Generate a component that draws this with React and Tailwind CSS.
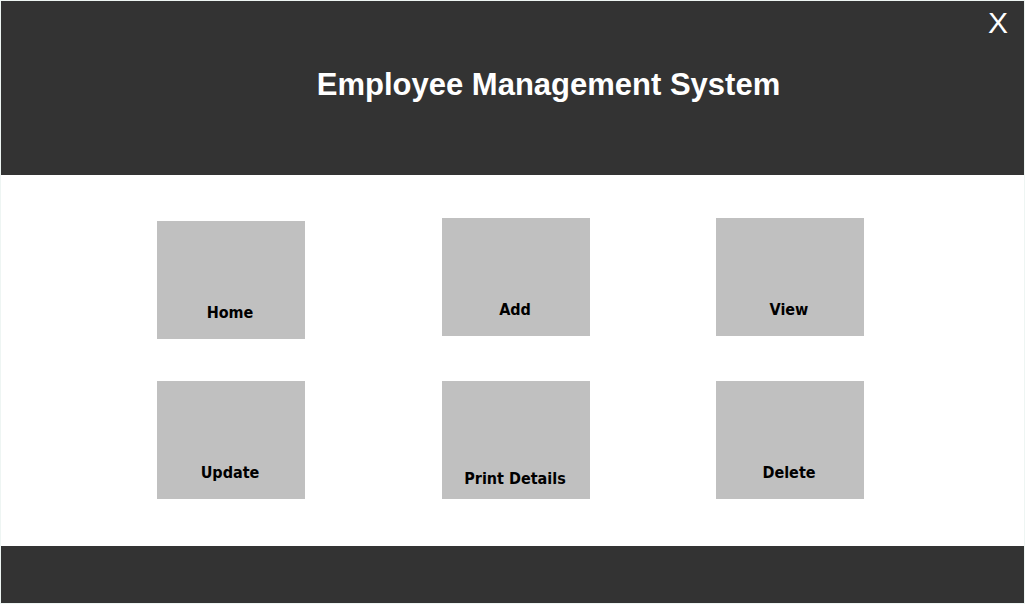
const tiles = [
  { label: 'Home', align: 'self-end', pad: 'pb-4' },
  { label: 'Add', align: 'self-start', pad: 'pb-4' },
  { label: 'View', align: 'self-start', pad: 'pb-4' },
  { label: 'Update', align: 'self-start', pad: 'pb-4' },
  { label: 'Print Details', align: 'self-start', pad: 'pb-2.5' },
  { label: 'Delete', align: 'self-start', pad: 'pb-4' },
];

function Tile({ label, align, pad }) {
  return (
    <button
      type="button"
      className={`flex h-[118px] w-[148px] items-end justify-center bg-[#c0c0c0] pr-0.5 ${align} ${pad}`}
    >
      <span className="font-['DejaVu_Sans_Condensed','DejaVu_Sans',sans-serif] text-base leading-5 font-bold text-black">
        {label}
      </span>
    </button>
  );
}

export default function App() {
  return (
    <div className="flex min-h-screen flex-col border border-[#eef5f3] bg-white font-['Liberation_Sans',Arial,sans-serif]">
      <header className="flex h-[174px] flex-col bg-[#333333] text-white">
        <div className="flex justify-end pt-1 pr-4">
          <button type="button" aria-label="Close" className="text-3xl leading-9">
            X
          </button>
        </div>
        <h1 className="pt-6 pl-[72px] text-center text-[31px] leading-10 font-bold">
          Employee Management System
        </h1>
      </header>
      <main className="flex grow justify-center pt-[43px] pr-1 pb-11">
        <nav
          aria-label="Employee actions"
          className="grid grid-cols-[285px_274px_148px] grid-rows-[121px_118px] content-start gap-y-[42px]"
        >
          {tiles.map((tile) => (
            <Tile key={tile.label} {...tile} />
          ))}
        </nav>
      </main>
      <footer className="h-[57px] bg-[#333333]" />
    </div>
  );
}
